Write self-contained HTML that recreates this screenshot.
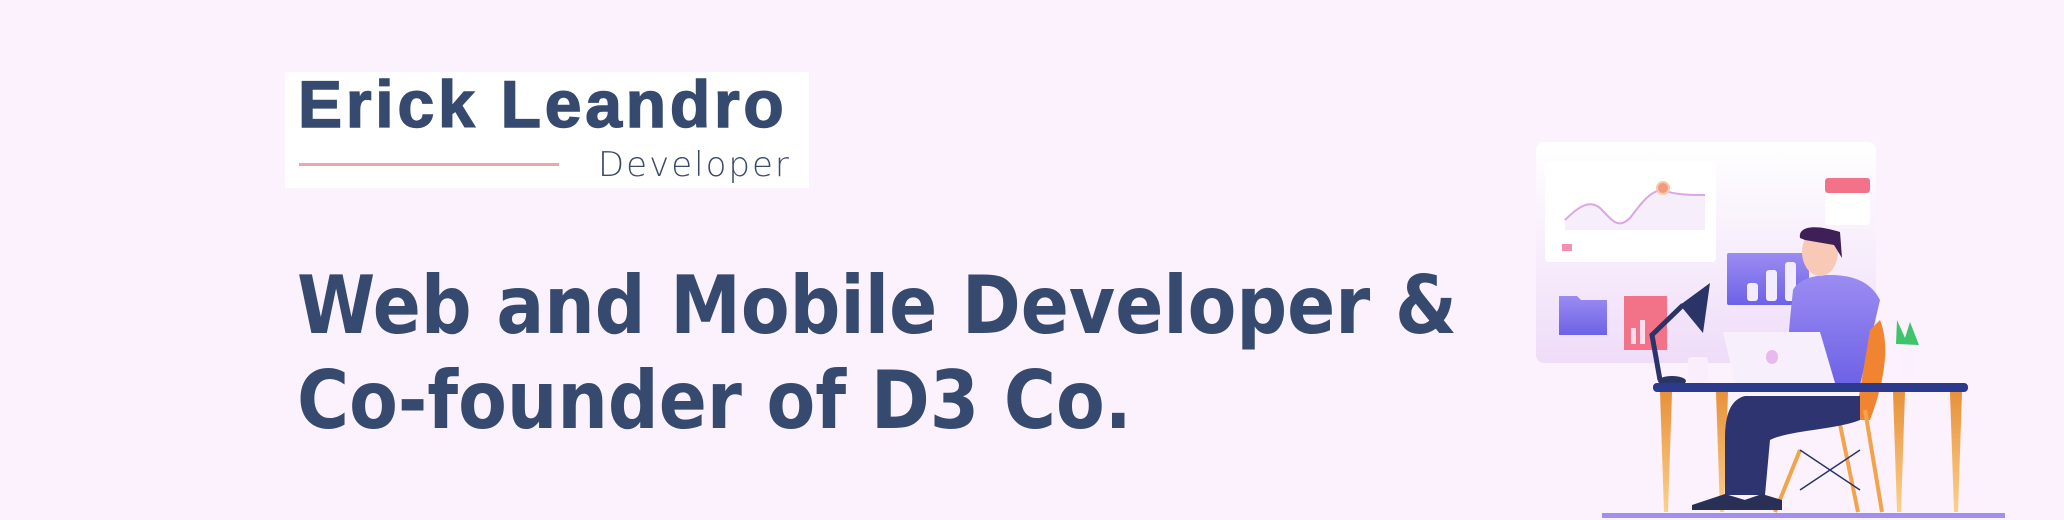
<!DOCTYPE html>
<html><head><meta charset="utf-8"><style>
html,body{margin:0;padding:0;width:2064px;height:520px;overflow:hidden;background:#fbf2fd;}
.logo{position:absolute;left:285px;top:72px;width:524px;height:116px;background:#fff;}
.n{position:absolute;left:298px;top:66px;font:bold 66px "Liberation Sans",sans-serif;color:#364a70;letter-spacing:3.8px;white-space:nowrap;-webkit-text-stroke:1.5px #364a70;}
.line{position:absolute;left:299px;top:163px;width:260px;height:3px;background:#f4a3a8;}
.d{position:absolute;left:598px;top:145px;font:300 34px "DejaVu Sans","Liberation Sans",sans-serif;color:#3b4a6b;white-space:nowrap;letter-spacing:2px;}
.h{position:absolute;left:297px;top:258px;font:bold 80px/95px "DejaVu Sans","Liberation Sans",sans-serif;color:#364a70;white-space:nowrap;transform:scaleX(0.887);transform-origin:0 0;}
svg{position:absolute;left:0;top:0}
</style></head><body>
<div class="logo"></div>
<div class="n">Erick Leandro</div>
<div class="line"></div>
<div class="d">Developer</div>
<div class="h">Web and Mobile Developer &amp;<br>Co-founder of D3 Co.</div>
<svg width="2064" height="520" viewBox="0 0 2064 520">
<defs>
<linearGradient id="bd" x1="0" y1="0" x2="0" y2="1"><stop offset="0" stop-color="#fff"/><stop offset="1" stop-color="#efdcf8"/></linearGradient>
<linearGradient id="pu" x1="0" y1="0" x2="0" y2="1"><stop offset="0" stop-color="#9b8cf2"/><stop offset="1" stop-color="#6d62e6"/></linearGradient>
<linearGradient id="lg" x1="0" y1="0" x2="0" y2="1"><stop offset="0" stop-color="#e8913a"/><stop offset="1" stop-color="#fbd08c"/></linearGradient>
</defs>
<rect x="1536" y="142" width="340" height="221" rx="8" fill="url(#bd)"/>
<rect x="1545" y="162" width="171" height="100" rx="4" fill="#fff"/>
<path d="M1565 220 C1580 205 1590 200 1600 208 C1612 220 1618 230 1630 218 C1640 205 1650 190 1663 190 C1675 195 1690 195 1705 195 L1705 230 L1565 230Z" fill="#f6eefb"/>
<path d="M1565 220 C1580 205 1590 200 1600 208 C1612 220 1618 230 1630 218 C1640 205 1650 190 1663 190 C1675 195 1690 195 1705 195" fill="none" stroke="#d9a6e6" stroke-width="2"/>
<circle cx="1663" cy="188" r="6" fill="#f19a7e" stroke="#f7c9a8" stroke-width="2"/>
<rect x="1562" y="244" width="10" height="7" fill="#f48fb1"/>
<rect x="1825" y="182" width="45" height="43" rx="3" fill="#fff"/>
<rect x="1825" y="178" width="45" height="15" rx="3" fill="#f27387"/>
<rect x="1727" y="253" width="82" height="52" rx="2" fill="url(#pu)"/>
<rect x="1747" y="283" width="11" height="18" rx="3" fill="#f3ecff"/>
<rect x="1766" y="270" width="11" height="31" rx="3" fill="#f3ecff"/>
<rect x="1785" y="262" width="11" height="39" rx="3" fill="#f3ecff"/>
<path d="M1559 296 h18 l4 4 h26 v35 h-48z" fill="url(#pu)"/>
<rect x="1624" y="296" width="43" height="54" fill="#f27387"/>
<rect x="1631" y="328" width="5" height="16" fill="#fde"/><rect x="1640" y="320" width="5" height="24" fill="#fde"/>
<path d="M1660 380 L1652 335 L1683 305" fill="none" stroke="#2a3468" stroke-width="5"/>
<path d="M1680 305 L1710 283 L1703 333Z" fill="#2a3468"/>
<ellipse cx="1672" cy="381" rx="14" ry="5" fill="#2a3468"/>
<rect x="1688" y="357" width="20" height="26" rx="3" fill="#fbeefc"/>
<path d="M1793 290 C1790 320 1785 360 1790 380 L1860 385 L1880 300 C1870 280 1850 275 1830 275 C1812 275 1798 280 1793 290Z" fill="url(#pu)"/>
<ellipse cx="1820" cy="252" rx="18" ry="24" fill="#f9c9b8"/>
<path d="M1800 238 C1798 226 1815 224 1840 232 L1842 258 L1834 245 L1805 240Z" fill="#3f1f57"/>
<path d="M1880 320 C1890 345 1885 380 1870 420 L1855 420 L1870 330Z" fill="#f08430"/>
<path d="M1723 332 L1820 332 L1835 383 L1735 383Z" fill="#f7effb"/>
<ellipse cx="1772" cy="357" rx="6" ry="7" fill="#e7b9ec"/>
<path d="M1896 344 L1897 320 L1905 338 L1910 322 L1919 345Z" fill="#3fc46b"/>
<rect x="1899" y="345" width="17" height="32" fill="#fbf0fd"/>
<rect x="1653" y="383" width="315" height="9" rx="4" fill="#2b3a8a"/>
<path d="M1660 392 h12 l-4 120 h-4z" fill="url(#lg)"/>
<path d="M1716 392 h12 l-4 120 h-4z" fill="url(#lg)"/>
<path d="M1893 392 h12 l-4 120 h-4z" fill="url(#lg)"/>
<path d="M1950 392 h12 l-4 120 h-4z" fill="url(#lg)"/>
<path d="M1835 400 L1858 512 M1865 410 L1882 512 M1800 450 L1775 512" stroke="#f2a44d" stroke-width="4"/>
<path d="M1800 450 L1860 490 M1860 450 L1800 490" stroke="#2a3468" stroke-width="1.5"/>
<path d="M1860 396 L1745 396 C1728 400 1725 420 1725 440 L1725 495 L1765 495 L1770 440 C1790 430 1835 430 1860 420Z" fill="#2e3470"/>
<path d="M1692 505 L1725 494 L1745 500 L1745 510 L1692 510Z" fill="#2a2f55"/>
<path d="M1730 505 L1762 494 L1782 500 L1782 510 L1730 510Z" fill="#2a2f55"/>
<rect x="1602" y="513" width="403" height="5" fill="#9f8ff0"/>
</svg>
</body></html>
